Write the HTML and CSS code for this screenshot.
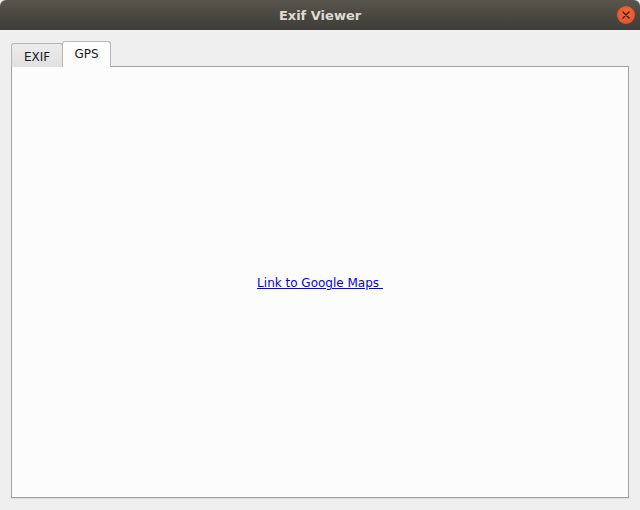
FILE: index.html
```html
<!DOCTYPE html>
<html>
<head>
<meta charset="utf-8">
<link rel="stylesheet" href="styles.css">
</head>
<body>
<div class="window">
  <div class="titlebar">
    <span class="title">Exif Viewer</span>
    <span class="close">
      <svg width="8" height="8" viewBox="0 0 8 8"><path d="M1 1L7 7M7 1L1 7" stroke="#3a1a0c" stroke-width="1.4" stroke-linecap="round"/></svg>
    </span>
  </div>
  <div class="content">
    <div class="tabs">
      <div class="tab">EXIF</div>
      <div class="tab active">GPS</div>
    </div>
    <div class="pane">
      <a class="link" href="#">Link to Google Maps&nbsp;</a>
    </div>
  </div>
</div>
</body>
</html>
```
FILE: styles.css
```css
html, body {
  margin: 0;
  padding: 0;
}
body {
  width: 640px;
  height: 510px;
  background: #efefef;
  font-family: "DejaVu Sans", "Noto Sans", sans-serif;
  overflow: hidden;
}
.window {
  display: flex;
  flex-direction: column;
  height: 510px;
}
.titlebar {
  height: 30px;
  flex: none;
  background: linear-gradient(#58554c, #3d3c37);
  border-radius: 6px 6px 0 0;
  display: flex;
  align-items: center;
  justify-content: center;
  position: relative;
}
.title {
  color: #dfdbd2;
  font-weight: bold;
  font-size: 13px;
}
.close {
  position: absolute;
  right: 5px;
  top: 6px;
  width: 18px;
  height: 18px;
  border-radius: 50%;
  background: radial-gradient(circle at 50% 40%, #f26a3c, #e14d1b);
  display: flex;
  align-items: center;
  justify-content: center;
}
.content {
  padding: 11px 11px 12px 11px;
  display: flex;
  flex-direction: column;
  flex: 1;
}
.tabs {
  display: flex;
  align-items: flex-end;
  height: 26px;
  margin-bottom: -1px;
  position: relative;
  z-index: 1;
}
.tab {
  box-sizing: border-box;
  height: 24px;
  width: 52px;
  border: 1px solid #b4b4b4;
  border-bottom: none;
  border-radius: 3px 3px 0 0;
  background: linear-gradient(#ececec, #e0e0e0);
  font-size: 12px;
  color: #1a1a1a;
  display: flex;
  align-items: center;
  justify-content: center;
  padding-top: 2px;
}
.tab.active {
  height: 26px;
  width: 49px;
  margin-left: -1px;
  background: #fcfcfc;
  border-color: #b8b8b8;
  padding-top: 0;
  padding-bottom: 2px;
}
.pane {
  flex: 1;
  background: #fcfcfc;
  border: 1px solid #a0a0a0;
  box-shadow: 0 1px 0 #dcdcdc;
  display: flex;
  align-items: center;
  justify-content: center;
  padding-top: 2px;
}
.link {
  color: #0000ff;
  font-size: 12px;
  text-decoration: underline;
}
```
